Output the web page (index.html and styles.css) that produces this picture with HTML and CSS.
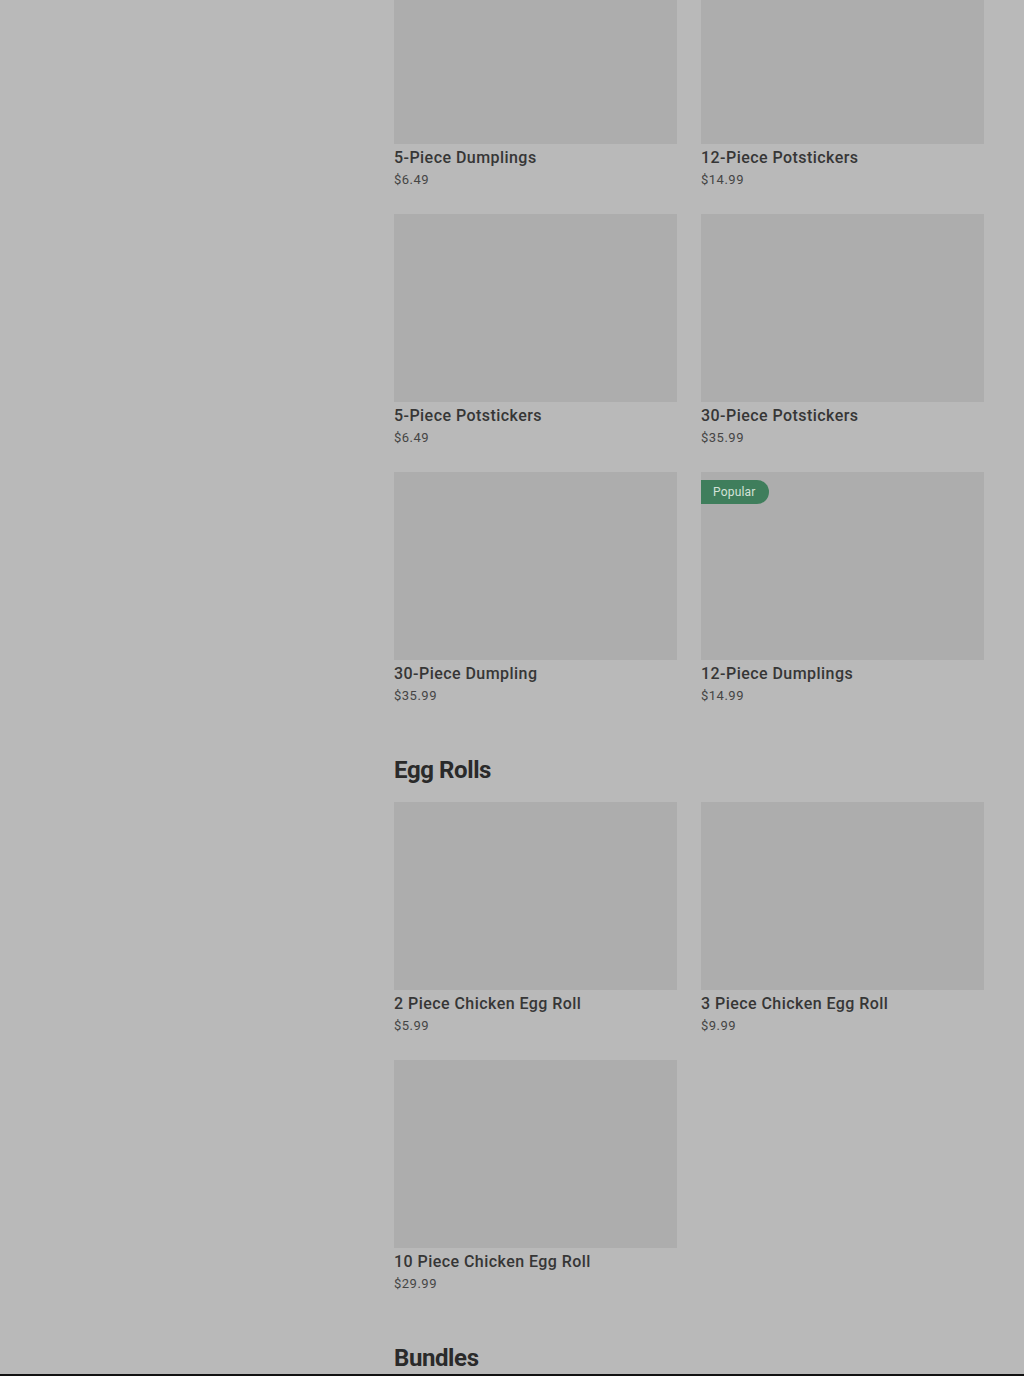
FILE: index.html
```html
<!DOCTYPE html>
<html lang="en">
<head>
<meta charset="utf-8">
<title>Menu</title>
<link rel="stylesheet" href="styles.css">
</head>
<body>
<div class="page">
  <aside class="sidebar"></aside>
  <main class="menu">
    <section class="section section-first">
      <div class="grid">
        <div class="card"><div class="thumb"></div><div class="name">5-Piece Dumplings</div><div class="price">$6.49</div></div>
        <div class="card"><div class="thumb"></div><div class="name">12-Piece Potstickers</div><div class="price">$14.99</div></div>
        <div class="card"><div class="thumb"></div><div class="name">5-Piece Potstickers</div><div class="price">$6.49</div></div>
        <div class="card"><div class="thumb"></div><div class="name">30-Piece Potstickers</div><div class="price">$35.99</div></div>
        <div class="card"><div class="thumb"></div><div class="name">30-Piece Dumpling</div><div class="price">$35.99</div></div>
        <div class="card"><div class="thumb"><span class="badge">Popular</span></div><div class="name">12-Piece Dumplings</div><div class="price">$14.99</div></div>
      </div>
    </section>
    <section class="section">
      <h2 class="heading">Egg Rolls</h2>
      <div class="grid">
        <div class="card"><div class="thumb"></div><div class="name">2 Piece Chicken Egg Roll</div><div class="price">$5.99</div></div>
        <div class="card"><div class="thumb"></div><div class="name">3 Piece Chicken Egg Roll</div><div class="price">$9.99</div></div>
        <div class="card"><div class="thumb"></div><div class="name">10 Piece Chicken Egg Roll</div><div class="price">$29.99</div></div>
      </div>
    </section>
    <section class="section">
      <h2 class="heading">Bundles</h2>
    </section>
  </main>
</div>
<div class="bottom-bar"></div>
</body>
</html>
```
FILE: styles.css
```css
html, body {
  margin: 0;
  padding: 0;
  background: #b9b9b9;
  height: 1376px;
  overflow: hidden;
}
body {
  font-family: Roboto, "Liberation Sans", Arial, sans-serif;
  color: #2f2f2f;
}
.page {
  display: grid;
  grid-template-columns: 394px 590px;
}
.menu {
  margin-top: -44px;
}
.section {
  margin-top: 49px;
}
.section-first {
  margin-top: 0;
}
.heading {
  margin: 0 0 16px 0;
  font-size: 24px;
  line-height: 32px;
  font-weight: 700;
  letter-spacing: -0.4px;
  color: #2a2a2a;
}
.grid {
  display: grid;
  grid-template-columns: 283px 283px;
  column-gap: 24px;
  row-gap: 25px;
}
.card {
  display: flex;
  flex-direction: column;
}
.thumb {
  position: relative;
  height: 188px;
  background: #adadad;
}
.badge {
  position: absolute;
  left: 0;
  top: 8px;
  height: 24px;
  line-height: 24px;
  padding: 0 13px 0 12px;
  font-size: 12px;
  letter-spacing: 0.2px;
  color: #d3e2d8;
  background: #3f7e5c;
  border-radius: 0 12px 12px 0;
}
.name {
  margin-top: 4px;
  font-size: 16px;
  line-height: 20px;
  font-weight: 500;
  letter-spacing: 0.45px;
  color: #363636;
}
.price {
  margin-top: 3px;
  font-size: 13px;
  line-height: 18px;
  letter-spacing: 0.5px;
  color: #454545;
}
.bottom-bar {
  position: fixed;
  left: 0;
  right: 0;
  bottom: 0;
  height: 2px;
  background: #111111;
}
```
